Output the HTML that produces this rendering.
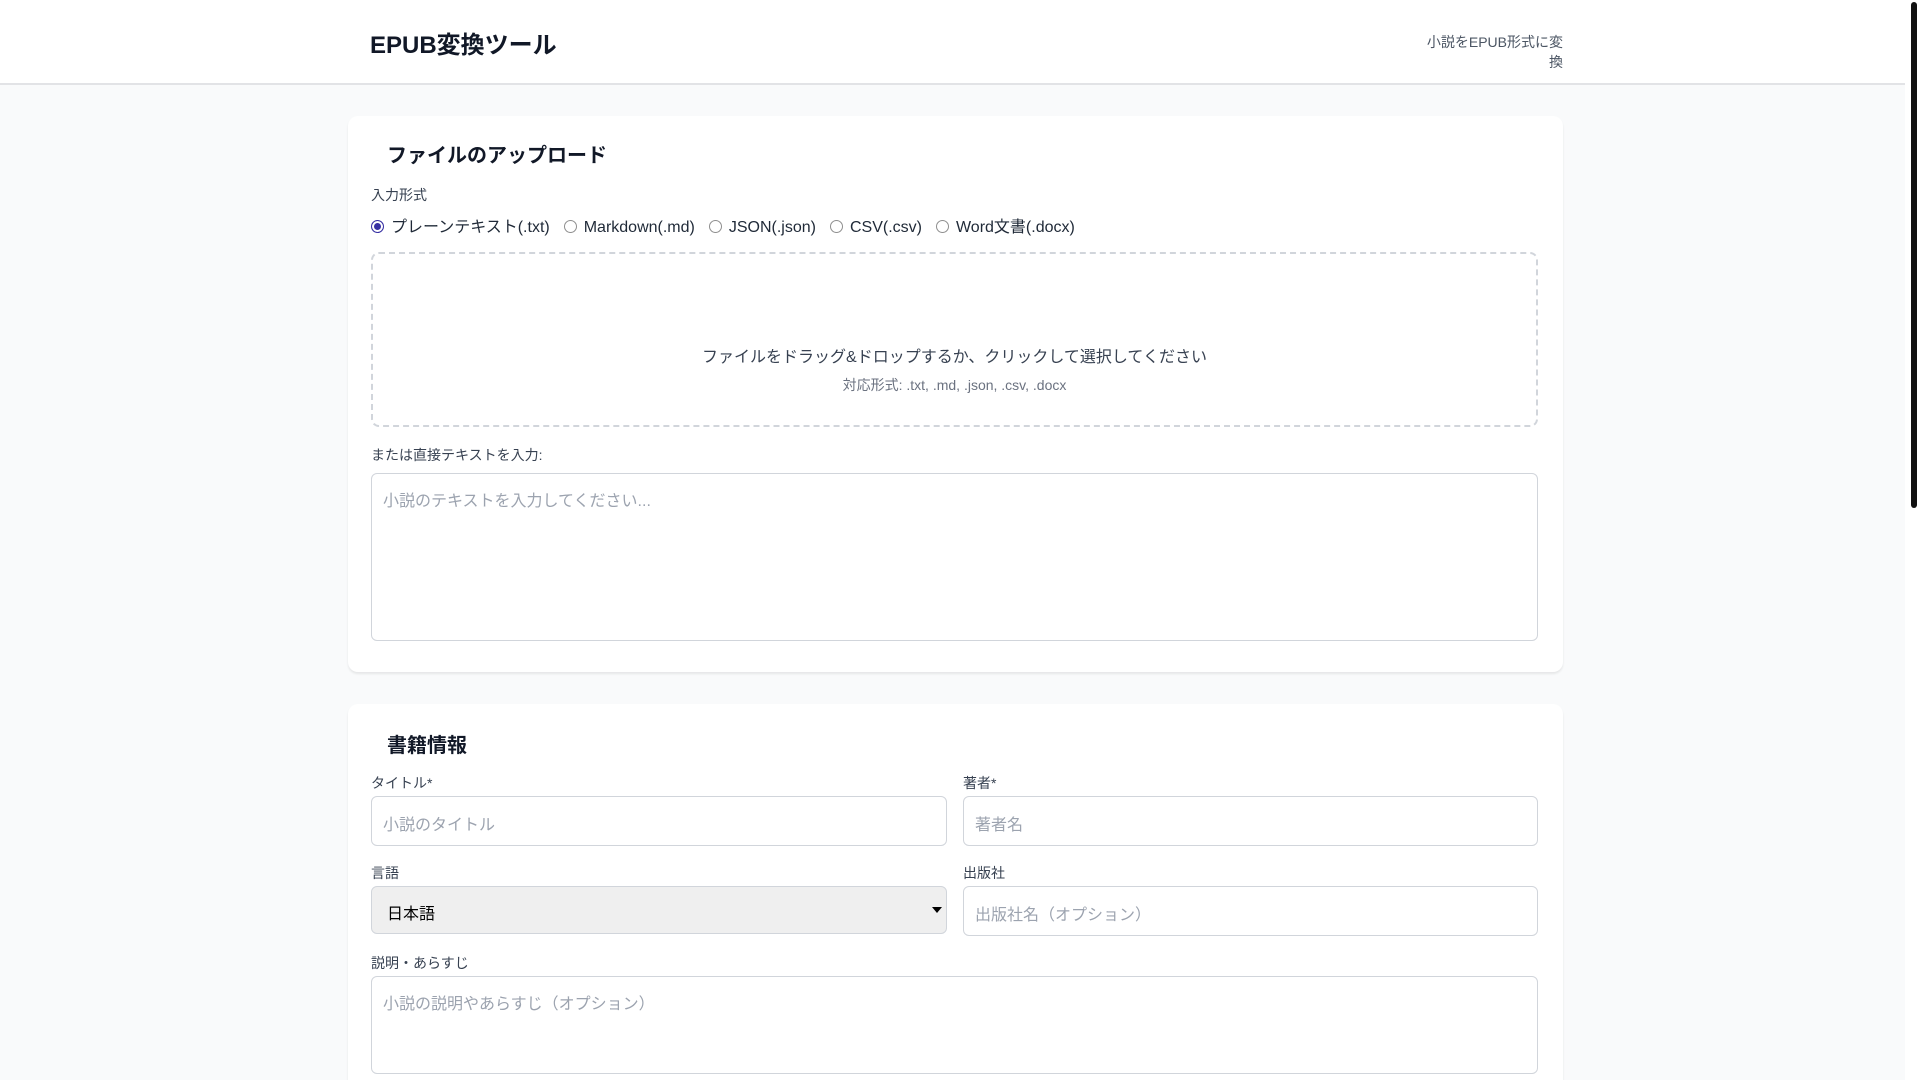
<!DOCTYPE html>
<html><head><meta charset="utf-8"><style>
*{box-sizing:border-box;margin:0;padding:0}
html,body{width:1920px;height:1080px;overflow:hidden}
body{background:#f9fafb;font-family:"Liberation Sans","Noto Sans CJK JP",sans-serif;color:#1f2937;position:relative}
.a{position:absolute}
header{position:absolute;left:0;top:0;width:1905px;height:85px;background:#fff;border-bottom:2px solid #e2e3e6}
.card{position:absolute;left:348px;width:1215px;background:#fff;border-radius:10px;box-shadow:0 2px 2px rgba(0,0,0,0.08)}
.h2{font-size:20px;font-weight:bold;color:#111827}
.lbl{font-size:14px;color:#374151}
.box{position:absolute;border:1px solid #d1d5db;border-radius:6px;background:#fff}
.ph{position:absolute;font-size:16px;color:#9ca3af}
.radio{display:inline-block;width:13px;height:13px;border:1px solid #8f8f8f;border-radius:50%;vertical-align:-1px;margin-right:7px;background:#fff}
.radio.on{border:1px solid #3730a3;box-shadow:inset 0 0 0 2px #fff;background:#3730a3}
.sb{position:absolute;left:1905px;top:0;width:15px;height:1080px;background:#fff}
.th{position:absolute;left:1911px;top:2px;width:6px;height:506px;background:#111;border-radius:3px}
</style></head><body>
<header>
<div class="a" style="left:370px;top:25px;font-size:24px;font-weight:bold;color:#111827">EPUB変換ツール</div>
<div class="a" style="left:1415px;top:32px;width:148px;text-align:right;font-size:14px;color:#4b5563">小説をEPUB形式に変換</div>
</header>

<div class="card" style="top:116px;height:556px"></div>
<div class="a h2" style="left:387px;top:139px">ファイルのアップロード</div>
<div class="a lbl" style="left:371px;top:185px">入力形式</div>
<div class="a" style="left:371px;top:213px;font-size:16px;color:#1f2937;white-space:nowrap">
<span class="radio on"></span>プレーンテキスト(.txt)<span style="display:inline-block;width:14px"></span><span class="radio"></span>Markdown(.md)<span style="display:inline-block;width:14px"></span><span class="radio"></span>JSON(.json)<span style="display:inline-block;width:14px"></span><span class="radio"></span>CSV(.csv)<span style="display:inline-block;width:14px"></span><span class="radio"></span>Word文書(.docx)</div>
<div class="a" style="left:371px;top:252px;width:1167px;height:175px;border:2px dashed #d1d5db;border-radius:8px"></div>
<div class="a" style="left:371px;top:343px;width:1167px;text-align:center;font-size:16px;color:#374151">ファイルをドラッグ&amp;ドロップするか、クリックして選択してください</div>
<div class="a" style="left:371px;top:375px;width:1167px;text-align:center;font-size:14px;color:#6b7280">対応形式: .txt, .md, .json, .csv, .docx</div>
<div class="a lbl" style="left:371px;top:445px">または直接テキストを入力:</div>
<div class="box" style="left:371px;top:473px;width:1167px;height:168px"></div>
<div class="ph" style="left:383px;top:487px">小説のテキストを入力してください...</div>

<div class="card" style="top:704px;height:400px"></div>
<div class="a h2" style="left:387px;top:729px">書籍情報</div>
<div class="a lbl" style="left:371px;top:773px">タイトル*</div>
<div class="a lbl" style="left:963px;top:773px">著者*</div>
<div class="box" style="left:371px;top:796px;width:576px;height:50px"></div>
<div class="ph" style="left:383px;top:811px">小説のタイトル</div>
<div class="box" style="left:963px;top:796px;width:575px;height:50px"></div>
<div class="ph" style="left:975px;top:811px">著者名</div>
<div class="a lbl" style="left:371px;top:863px">言語</div>
<div class="a lbl" style="left:963px;top:863px">出版社</div>
<div class="box" style="left:371px;top:886px;width:576px;height:48px;background:#efefef"></div>
<div class="a" style="left:387px;top:900px;font-size:16px;color:#000">日本語</div>
<div class="a" style="left:932px;top:907px;width:0;height:0;border-left:5px solid transparent;border-right:5px solid transparent;border-top:6px solid #000"></div>
<div class="box" style="left:963px;top:886px;width:575px;height:50px"></div>
<div class="ph" style="left:975px;top:901px">出版社名（オプション）</div>
<div class="a lbl" style="left:371px;top:953px">説明・あらすじ</div>
<div class="box" style="left:371px;top:976px;width:1167px;height:98px"></div>
<div class="ph" style="left:383px;top:990px">小説の説明やあらすじ（オプション）</div>

<div class="sb"></div><div class="th"></div>
</body></html>
